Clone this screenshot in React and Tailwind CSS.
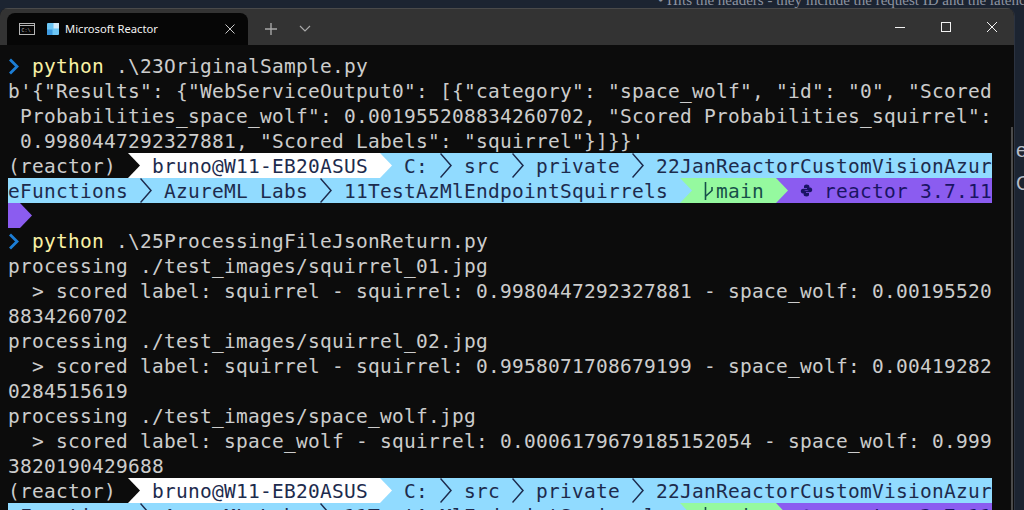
const MONO = "font-['DejaVu_Sans_Mono',monospace]"

const outputTop = [
  `b'{"Results": {"WebServiceOutput0": [{"category": "space_wolf", "id": "0", "Scored`,
  ` Probabilities_space_wolf": 0.001955208834260702, "Scored Probabilities_squirrel":`,
  ` 0.9980447292327881, "Scored Labels": "squirrel"}]}}'`,
]

const outputBottom = [
  'processing ./test_images/squirrel_01.jpg',
  '  > scored label: squirrel - squirrel: 0.9980447292327881 - space_wolf: 0.00195520',
  '8834260702',
  'processing ./test_images/squirrel_02.jpg',
  '  > scored label: squirrel - squirrel: 0.9958071708679199 - space_wolf: 0.00419282',
  '0284515619',
  'processing ./test_images/space_wolf.jpg',
  '  > scored label: space_wolf - squirrel: 0.0006179679185152054 - space_wolf: 0.999',
  '3820190429688',
]

function Row({ children, className = '' }) {
  return <div className={`flex h-[25px] items-start whitespace-pre ${className}`}>{children}</div>
}

// one terminal cell is 12px wide
function Txt({ cols, className = '', children }) {
  return (
    <span className={`block shrink-0 ${className}`} style={{ width: cols * 12 }}>
      {children}
    </span>
  )
}

function Chevron() {
  return (
    <svg width="12" height="25" viewBox="0 0 12 25" className="shrink-0 text-[#1d2b4d]" fill="none" stroke="currentColor" strokeWidth="1.5">
      <path d="M0.5 0.5L11 12.5L0.5 24.5" />
    </svg>
  )
}

function Arrow({ from, to }) {
  return (
    <svg width="12" height="25" viewBox="0 0 12 25" className="shrink-0" style={{ background: to }}>
      <path d="M0 0L12 12.5L0 25Z" fill={from} />
    </svg>
  )
}

function Prompt({ file }) {
  return (
    <Row>
      <svg width="12" height="25" viewBox="0 0 12 25" className="shrink-0" fill="none" stroke="#1c7ed6" strokeWidth="2.8">
        <path d="M2 6.5L9 13.5L2 20.5" />
      </svg>
      <Txt cols={1} />
      <span className="text-[#f9f1a5]">python</span>
      <span> {file}</span>
    </Row>
  )
}

function PromptBar() {
  return (
    <>
      <Row>
        <Txt cols={9}>(reactor)</Txt>
        <Txt cols={1} />
        <Arrow from="#0c0c0c" to="#ffffff" />
        <div className="flex h-[25px] bg-white text-[#1d2b4d]">
          <Txt cols={1} />
          <Txt cols={18}>bruno@W11-EB20ASUS</Txt>
          <Txt cols={1} />
        </div>
        <Arrow from="#ffffff" to="#91dbff" />
        <div className="flex h-[25px] bg-[#91dbff] text-[#1d2b4d]">
          <Txt cols={1} />
          <Txt cols={2}>C:</Txt>
          <Txt cols={1} />
          <Chevron />
          <Txt cols={1} />
          <Txt cols={3}>src</Txt>
          <Txt cols={1} />
          <Chevron />
          <Txt cols={1} />
          <Txt cols={7}>private</Txt>
          <Txt cols={1} />
          <Chevron />
          <Txt cols={1} />
          <Txt cols={28}>22JanReactorCustomVisionAzur</Txt>
        </div>
      </Row>
      <Row className="text-[#1d2b4d]">
        <div className="flex h-[25px] bg-[#91dbff]">
          <Txt cols={10}>eFunctions</Txt>
          <Txt cols={1} />
          <Chevron />
          <Txt cols={1} />
          <Txt cols={12}>AzureML Labs</Txt>
          <Txt cols={1} />
          <Chevron />
          <Txt cols={1} />
          <Txt cols={27}>11TestAzMlEndpointSquirrels</Txt>
          <Txt cols={1} />
        </div>
        <Arrow from="#91dbff" to="#95f99f" />
        <div className="flex h-[25px] bg-[#95f99f] text-[#17504a]">
          <Txt cols={1} />
          <svg width="12" height="25" viewBox="0 0 12 25" className="shrink-0" fill="none" stroke="#17504a" strokeWidth="1.6">
            <path d="M1.5 4V22M8 9V12.5L2 18" />
          </svg>
          <Txt cols={4}>main</Txt>
          <Txt cols={1} />
        </div>
        <Arrow from="#95f99f" to="#8b5cf0" />
        <div className="flex h-[25px] bg-[#8b5cf0] text-[#1a1464]">
          <Txt cols={1} />
          <svg width="13" height="25" viewBox="0 0 12 25" className="shrink-0" fill="#1a1464">
            <path d="M6 6.5C4 6.5 3.5 7.5 3.5 8.5V10H6.5V10.7H2.5C1 10.7 0.3 11.8 0.3 13C0.3 14.3 1 15.5 2.3 15.5H3.5V14C3.5 13 4.3 12.3 5.3 12.3H7.6C8.4 12.3 8.9 11.7 8.9 11V8.5C8.9 7.2 7.8 6.5 6 6.5Z" />
            <path d="M6 18.5C8 18.5 8.5 17.5 8.5 16.5V15H5.5V14.3H9.5C11 14.3 11.7 13.2 11.7 12C11.7 10.7 11 9.5 9.7 9.5H8.5V11C8.5 12 7.7 12.7 6.7 12.7H4.4C3.6 12.7 3.1 13.3 3.1 14V16.5C3.1 17.8 4.2 18.5 6 18.5Z" />
          </svg>
          <span className="block w-[11px] shrink-0" />
          <Txt cols={14}>reactor 3.7.11</Txt>
        </div>
      </Row>
    </>
  )
}

export default function App() {
  return (
    <div className="flex h-[510px] w-[1024px] flex-col overflow-hidden bg-[#1c2431]">
      <div className="h-2 shrink-0 overflow-hidden whitespace-pre pl-[658px] font-['Liberation_Serif',serif] text-[15px] leading-[0px] text-[#8d93a0]">
        • Hits the headers - they include the request ID and the latency
      </div>
      <div className="flex min-h-0 flex-1">
        <div className="relative flex w-[1015px] shrink-0 flex-col overflow-hidden rounded-t-lg border-r border-[#2c3340] bg-[#0c0c0c]">
          <div className="flex h-[37px] shrink-0 items-end border-t border-[#4a4a4a] bg-[#333333] pl-[7px]">
            <div className="flex h-8 w-[241px] items-center rounded-t-lg bg-[#060606] pl-3 font-['Noto_Sans',sans-serif] text-[11.2px] text-[#f2f2f2]">
              <svg width="16" height="12" viewBox="0 0 16 12" fill="none" stroke="#b5b5b5" strokeWidth="1">
                <rect x="0.5" y="0.5" width="15" height="11" />
                <path d="M0.5 2.5H15.5" />
                <text x="2.5" y="9" fontSize="5" fill="#b5b5b5" stroke="none" fontFamily="Liberation Mono">C:\</text>
              </svg>
              <svg width="12" height="12" viewBox="0 0 12 12" className="ml-3">
                <rect width="12" height="12" rx="1" fill="#6cc6f5" />
                <rect x="6.5" width="5.5" height="5.5" fill="#d2ecfb" />
                <rect y="6.5" width="5.5" height="5.5" fill="#3d9ae0" />
              </svg>
              <span className="ml-[6px]">Microsoft Reactor</span>
              <svg width="10" height="10" viewBox="0 0 10 10" className="ml-[67px]" stroke="#c8c8c8" strokeWidth="1">
                <path d="M0.5 0.5L9.5 9.5M9.5 0.5L0.5 9.5" />
              </svg>
            </div>
            <div className="flex h-8 items-center">
              <svg width="14" height="14" viewBox="0 0 14 14" className="ml-4" stroke="#a8a8a8" strokeWidth="1.4">
                <path d="M7 1V13M1 7H13" />
              </svg>
              <svg width="12" height="8" viewBox="0 0 12 8" className="ml-[21px]" fill="none" stroke="#a8a8a8" strokeWidth="1.2">
                <path d="M1 1L6 6L11 1" />
              </svg>
            </div>
            <div className="ml-auto flex h-full items-start pt-[13px] pr-[17px]">
              <svg width="10" height="10" viewBox="0 0 10 10" stroke="#f2f2f2" strokeWidth="1" className="mr-[36px]">
                <path d="M0 5.5H10" />
              </svg>
              <svg width="10" height="10" viewBox="0 0 10 10" fill="none" stroke="#f2f2f2" strokeWidth="1" className="mr-[36px]">
                <rect x="0.5" y="0.5" width="9" height="9" />
              </svg>
              <svg width="10" height="10" viewBox="0 0 10 10" stroke="#f2f2f2" strokeWidth="1">
                <path d="M0 0L10 10M10 0L0 10" />
              </svg>
            </div>
          </div>
          <div className={`flex-1 pl-2 pt-2 text-[19.5px] leading-[27px] tracking-[0.26px] text-[#cccccc] ${MONO}`}>
            <Prompt file=".\23OriginalSample.py" />
            {outputTop.map((line) => (
              <Row key={line}>{line}</Row>
            ))}
            <PromptBar />
            <Row>
              <span className="block h-[25px] w-3 bg-[#8b5cf0]" />
              <Arrow from="#8b5cf0" to="#0c0c0c" />
            </Row>
            <Prompt file=".\25ProcessingFileJsonReturn.py" />
            {outputBottom.map((line) => (
              <Row key={line}>{line}</Row>
            ))}
            <PromptBar />
          </div>
          {/* scrollbar thumb */}
          <div className="absolute right-[1px] top-[119px] bottom-0 w-[2px] bg-[#4a4a4a]" />
        </div>
        <div className="flex-1 overflow-hidden bg-[#1c2431] pt-[126px] pl-[1px] font-['Liberation_Sans',sans-serif] text-[20px] leading-[33px] text-[#b9bec8]">
          <div>e</div>
          <div>C</div>
        </div>
      </div>
    </div>
  )
}
